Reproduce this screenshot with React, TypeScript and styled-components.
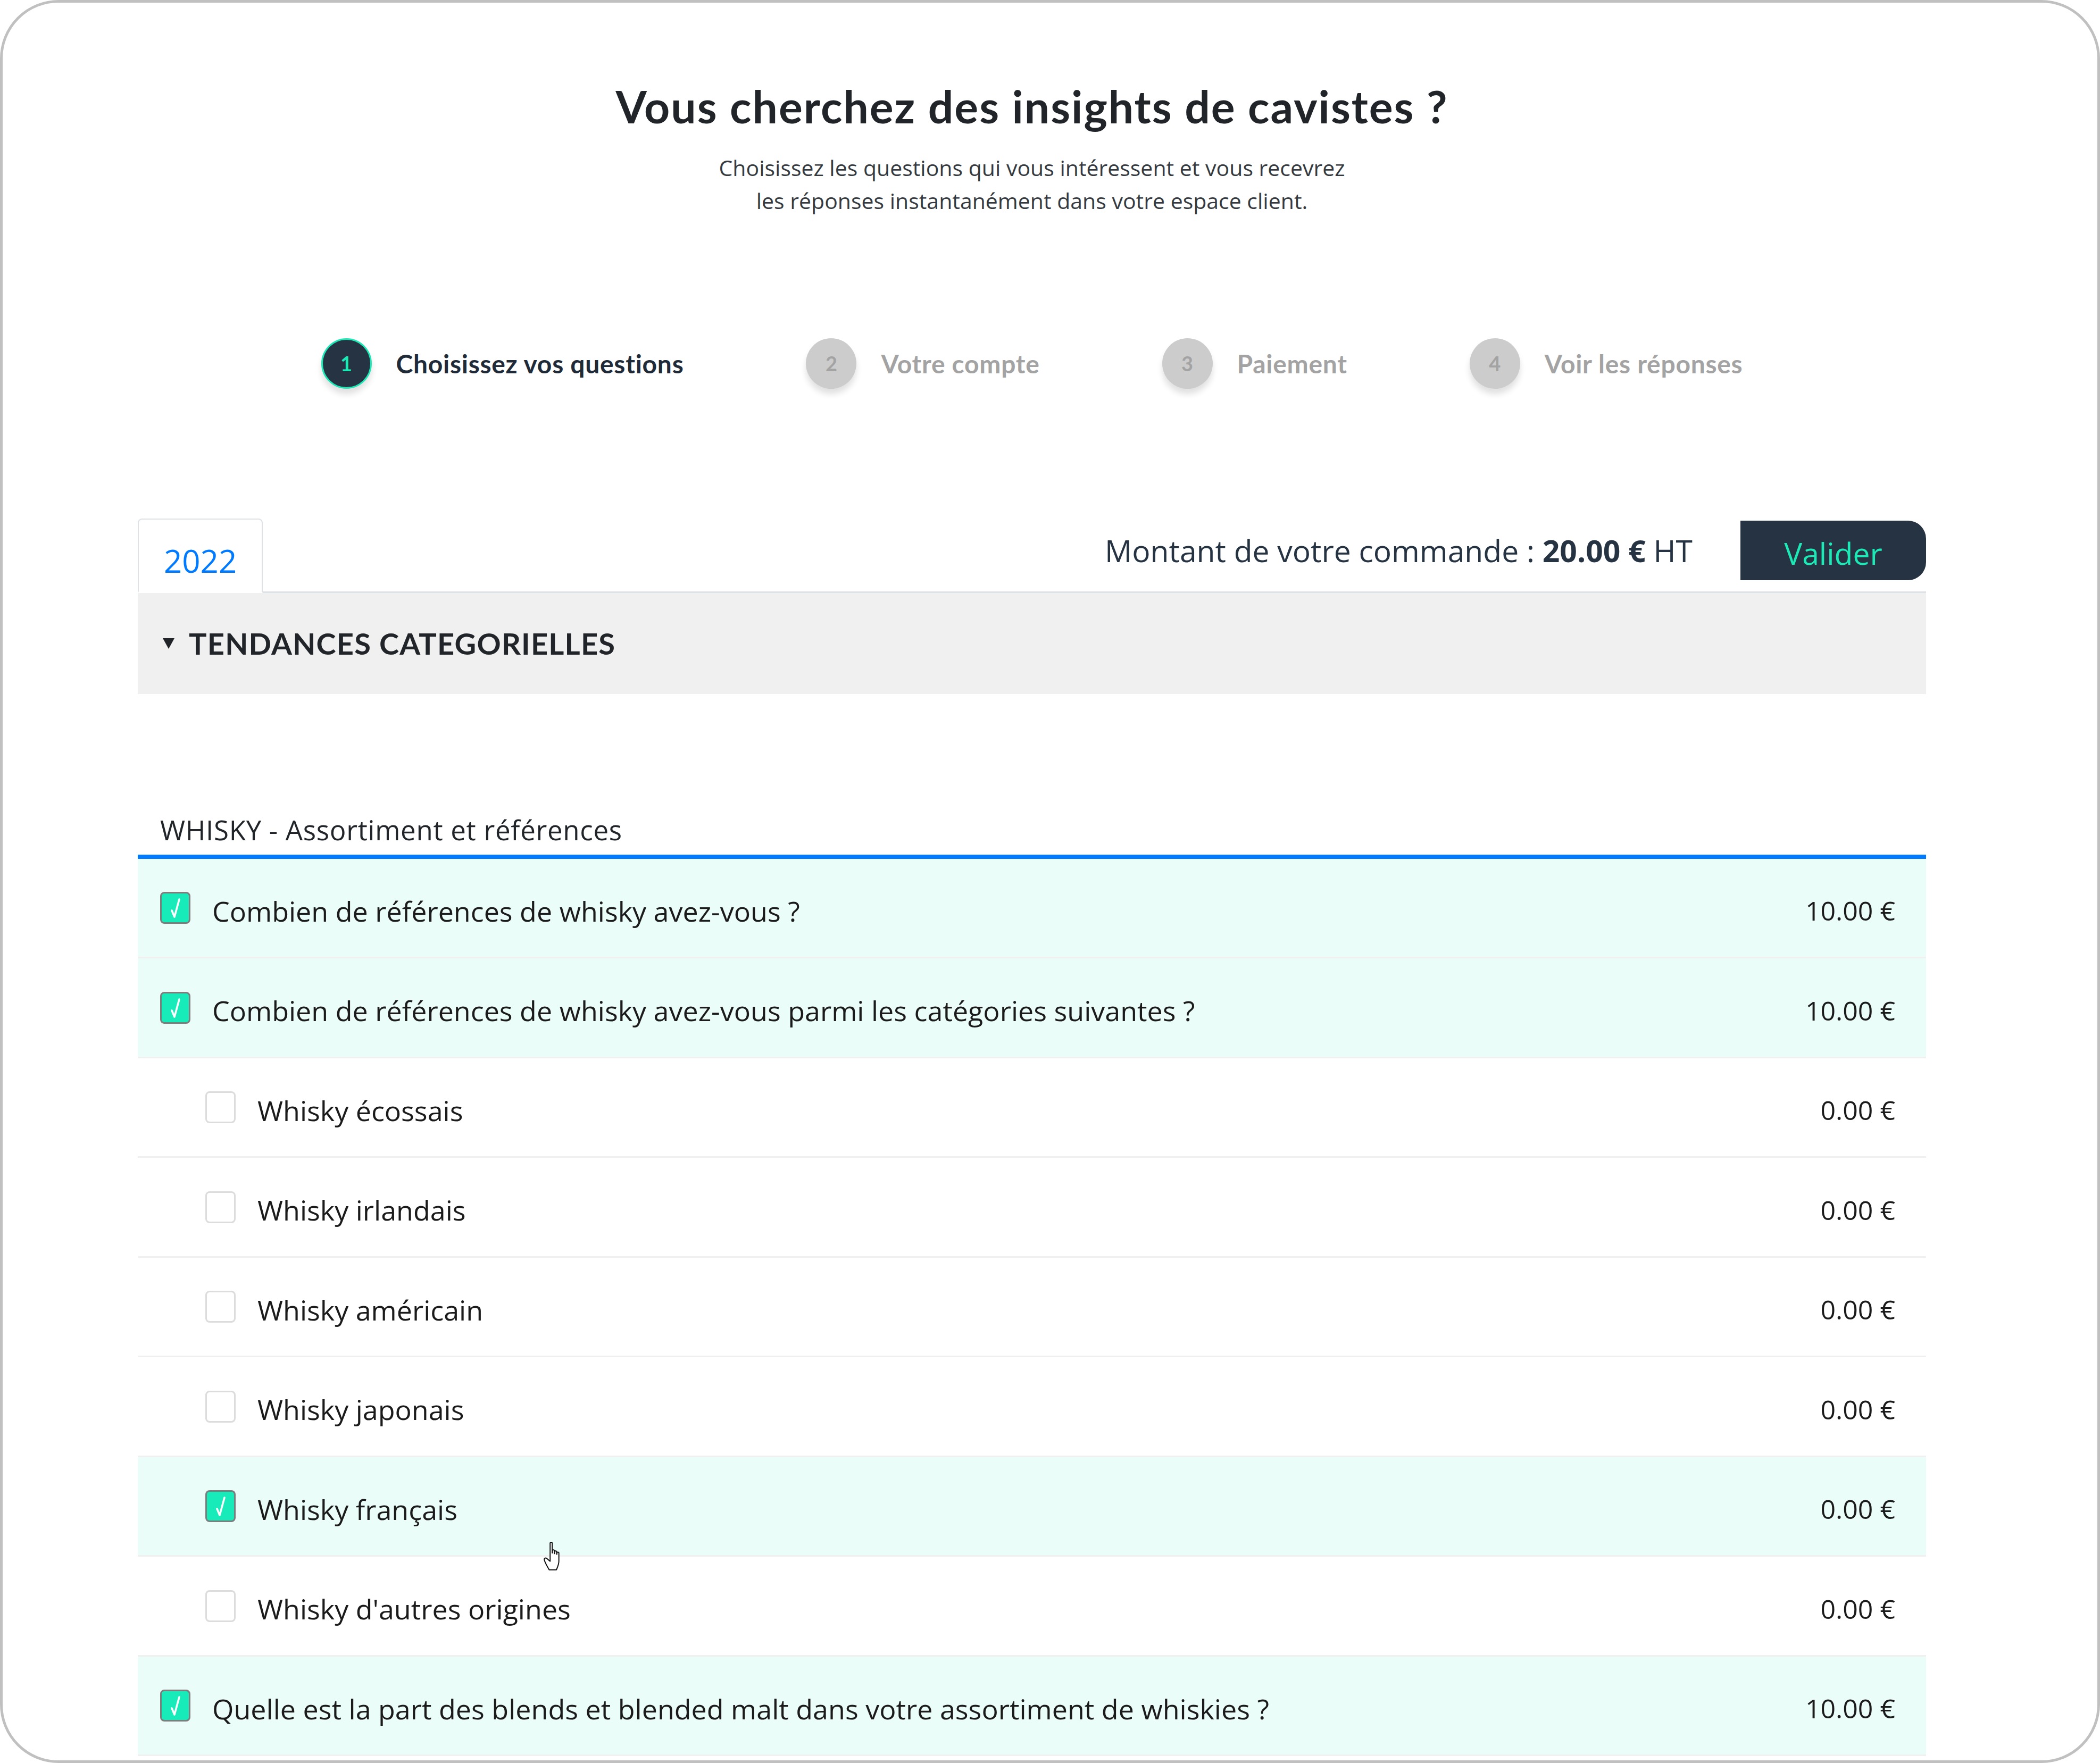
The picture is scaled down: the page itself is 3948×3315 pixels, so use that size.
import styled, { createGlobalStyle } from "styled-components";

const GlobalStyle = createGlobalStyle`
  html, body {
    margin: 0;
    padding: 0;
    background: #ffffff;
  }
  body {
    font-family: "Open Sans", "Noto Sans", sans-serif;
    color: #212529;
  }
  * {
    box-sizing: border-box;
  }
`;

interface Question {
  label: string;
  price: string;
  checked: boolean;
  sub?: boolean;
  cursor?: boolean;
}

const questions: Question[] = [
  { label: "Combien de références de whisky avez-vous ?", price: "10.00 €", checked: true },
  {
    label: "Combien de références de whisky avez-vous parmi les catégories suivantes ?",
    price: "10.00 €",
    checked: true,
  },
  { label: "Whisky écossais", price: "0.00 €", checked: false, sub: true },
  { label: "Whisky irlandais", price: "0.00 €", checked: false, sub: true },
  { label: "Whisky américain", price: "0.00 €", checked: false, sub: true },
  { label: "Whisky japonais", price: "0.00 €", checked: false, sub: true },
  { label: "Whisky français", price: "0.00 €", checked: true, sub: true, cursor: true },
  { label: "Whisky d'autres origines", price: "0.00 €", checked: false, sub: true },
  {
    label: "Quelle est la part des blends et blended malt dans votre assortiment de whiskies ?",
    price: "10.00 €",
    checked: true,
  },
];

const steps = ["Choisissez vos questions", "Votre compte", "Paiement", "Voir les réponses"];

const Frame = styled.div`
  width: 3948px;
  height: 3315px;
  border: 5px solid #c0c0c0;
  border-radius: 110px;
  overflow: hidden;
  background: #ffffff;
`;

const Content = styled.div`
  width: 3362px;
  margin-left: 254px;
`;

const Title = styled.h1`
  margin: 145px 0 0;
  font-family: Lato, "Open Sans", sans-serif;
  font-weight: 700;
  font-size: 84px;
  letter-spacing: 2px;
  line-height: 1.2;
  text-align: center;
  color: #212529;
`;

const Subtitle = styled.p`
  margin: 33px 0 0;
  font-size: 41px;
  line-height: 62px;
  text-align: center;
  color: #343a40;
`;

const Stepper = styled.div`
  margin-top: 228px;
  display: flex;
  justify-content: center;
  gap: 230px;
`;

const Step = styled.div`
  display: flex;
  align-items: center;
  gap: 46px;
`;

const StepCircle = styled.div<{ $active: boolean }>`
  width: 95px;
  height: 95px;
  border-radius: 50%;
  display: flex;
  align-items: center;
  justify-content: center;
  font-family: Lato, sans-serif;
  font-weight: 700;
  font-size: 38px;
  background: ${(p) => (p.$active ? "#253342" : "#cccccc")};
  color: ${(p) => (p.$active ? "#1de9b6" : "#a3a3a3")};
  border: ${(p) => (p.$active ? "3px solid #1de9b6" : "none")};
  box-shadow: 0 10px 12px rgba(0, 0, 0, 0.12);
`;

const StepLabel = styled.span<{ $active: boolean }>`
  font-family: Lato, sans-serif;
  font-weight: 700;
  font-size: 48px;
  letter-spacing: 0.7px;
  color: ${(p) => (p.$active ? "#1f2b38" : "#a3a3a3")};
`;

const TabBar = styled.div`
  margin-top: 244px;
  display: flex;
  justify-content: space-between;
  align-items: flex-start;
  border-bottom: 3px solid #dee2e6;
`;

const Tab = styled.div`
  margin-bottom: -3px;
  padding: 47px 47px 28px;
  border: 2px solid #dee2e6;
  border-bottom: 3px solid #ffffff;
  border-radius: 8px 8px 0 0;
  background: #ffffff;
  font-size: 60px;
  line-height: 1;
  color: #007bff;
`;

const OrderBox = styled.div`
  margin-top: 4px;
  display: flex;
  align-items: center;
  gap: 90px;
`;

const Amount = styled.span`
  font-size: 57px;
  color: #253342;

  strong {
    font-weight: 700;
  }
`;

const ValidateButton = styled.button`
  width: 349px;
  height: 112px;
  border: none;
  border-radius: 0 34px 34px 0;
  background: #253342;
  color: #1de9b6;
  font-family: "Open Sans", sans-serif;
  font-size: 57px;
  padding: 10px 0 0;
`;

const CategoryHeader = styled.div`
  height: 190px;
  background: #f0f0f0;
  display: flex;
  align-items: center;
  gap: 26px;
  padding-left: 46px;
`;

const CategoryTitle = styled.span`
  font-family: Lato, sans-serif;
  font-weight: 700;
  font-size: 56px;
  letter-spacing: 1.2px;
  text-transform: uppercase;
  color: #212529;
`;

const SectionTitle = styled.div`
  margin-top: 228px;
  padding: 0 0 19px 42px;
  font-size: 51px;
  letter-spacing: 0.7px;
  line-height: 55px;
  color: #212529;
  border-bottom: 8px solid #007bff;
`;

const QuestionRow = styled.div<{ $checked: boolean; $sub?: boolean }>`
  position: relative;
  height: 187.5px;
  display: flex;
  align-items: center;
  gap: 41px;
  padding: 10px 58px 0 ${(p) => (p.$sub ? "127px" : "42px")};
  background: ${(p) => (p.$checked ? "#ebfdf9" : "#ffffff")};
  border-bottom: 3px solid #f0f0f0;
`;

const Checkbox = styled.span<{ $checked: boolean }>`
  flex: none;
  width: 57px;
  height: 60px;
  margin-top: -10px;
  border-radius: 8px;
  display: flex;
  align-items: center;
  justify-content: center;
  background: ${(p) => (p.$checked ? "#17ebb9" : "#ffffff")};
  border: 3px solid ${(p) => (p.$checked ? "#7d7d7d" : "#dcdcdc")};
`;

const QuestionLabel = styled.span`
  flex: 1;
  font-size: 52px;
  color: #1b1b1b;
`;

const Price = styled.span`
  font-size: 50px;
  color: #1b1b1b;
`;

const Cursor = styled.svg`
  position: absolute;
  z-index: 2;
  left: 762px;
  top: 158px;
  width: 44px;
  height: 57px;
`;

function CheckMark() {
  return (
    <svg width="32" height="46" viewBox="0 0 32 46">
      <path
        d="M9 28 L14 40 L23 7"
        fill="none"
        stroke="#ffffff"
        strokeWidth="3.6"
        strokeLinecap="round"
        strokeLinejoin="round"
      />
    </svg>
  );
}

function Caret() {
  return (
    <svg width="24" height="22" viewBox="0 0 24 22">
      <path d="M1 1 L23 1 L12 21 Z" fill="#212529" />
    </svg>
  );
}

function HandCursor() {
  return (
    <Cursor viewBox="0 0 20 26">
      <path
        d="M6 1.8 C6 0.6 7.8 0.6 7.8 1.8 L7.8 10 L8 10 L8 8.2 C8 7.1 9.7 7.1 9.7 8.2 L9.7 10.6 L9.9 10.6 L9.9 9.2 C9.9 8.1 11.6 8.1 11.6 9.2 L11.6 11.2 L11.8 11.2 L11.8 10.2 C11.8 9.1 13.5 9.1 13.5 10.2 L13.5 17 C13.5 20 12.4 22 11.4 24.5 L5.2 24.5 C4 22.4 1.6 18.6 1 16 C0.7 14.6 2 13.8 3.2 14.8 L6 17.2 Z"
        fill="#ffffff"
        stroke="#111111"
        strokeWidth="0.9"
        strokeLinejoin="round"
      />
    </Cursor>
  );
}

export default function App() {
  return (
    <>
      <GlobalStyle />
      <Frame>
        <Content>
          <Title>Vous cherchez des insights de cavistes ?</Title>
          <Subtitle>
            Choisissez les questions qui vous intéressent et vous recevrez
            <br />
            les réponses instantanément dans votre espace client.
          </Subtitle>

          <Stepper>
            {steps.map((label, i) => (
              <Step key={label}>
                <StepCircle $active={i === 0}>{i + 1}</StepCircle>
                <StepLabel $active={i === 0}>{label}</StepLabel>
              </Step>
            ))}
          </Stepper>

          <TabBar>
            <Tab>2022</Tab>
            <OrderBox>
              <Amount>
                Montant de votre commande : <strong>20.00 €</strong> HT
              </Amount>
              <ValidateButton>Valider</ValidateButton>
            </OrderBox>
          </TabBar>

          <CategoryHeader>
            <Caret />
            <CategoryTitle>Tendances categorielles</CategoryTitle>
          </CategoryHeader>

          <SectionTitle>WHISKY - Assortiment et références</SectionTitle>

          {questions.map((q) => (
            <QuestionRow key={q.label} $checked={q.checked} $sub={q.sub}>
              <Checkbox $checked={q.checked}>{q.checked && <CheckMark />}</Checkbox>
              <QuestionLabel>{q.label}</QuestionLabel>
              <Price>{q.price}</Price>
              {q.cursor && <HandCursor />}
            </QuestionRow>
          ))}
        </Content>
      </Frame>
    </>
  );
}
